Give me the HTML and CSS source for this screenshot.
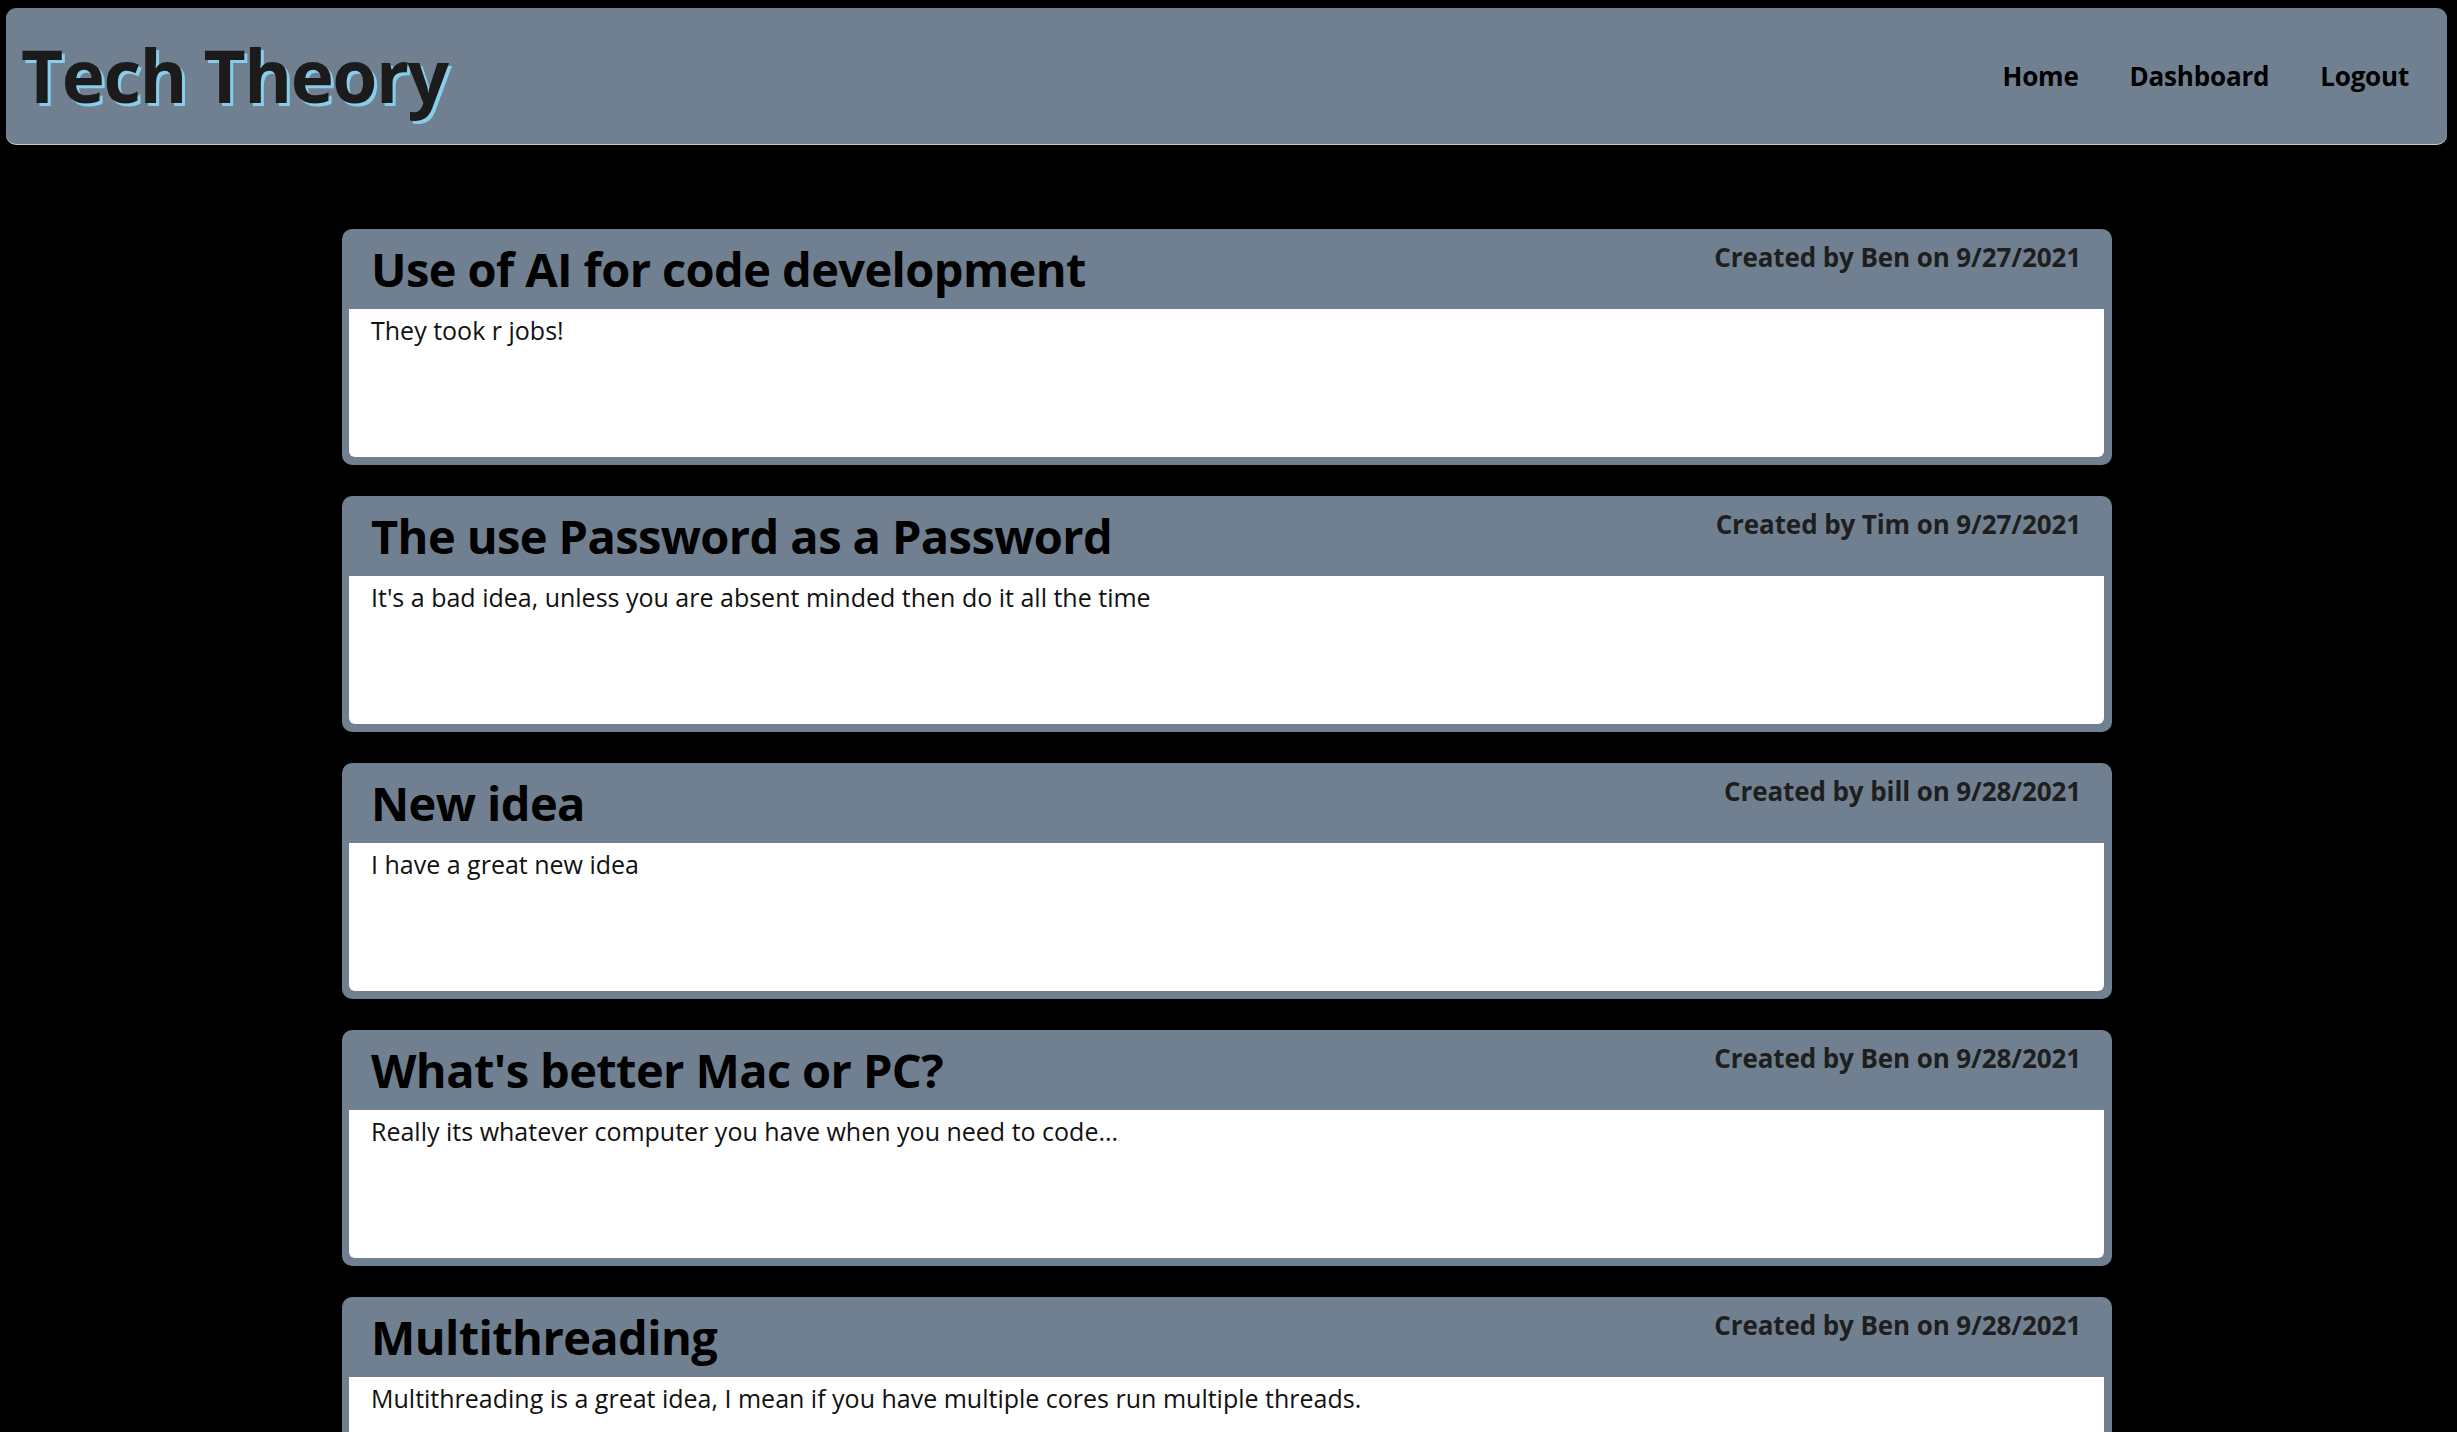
FILE: index.html
```html
<!DOCTYPE html>
<html lang="en">
<head>
<meta charset="utf-8">
<title>Tech Theory</title>
<link rel="stylesheet" href="styles.css">
</head>
<body>
<header class="site-header">
  <h1 class="brand">Tech Theory</h1>
  <nav class="nav">
    <a class="nav-link" href="#">Home</a>
    <a class="nav-link" href="#">Dashboard</a>
    <a class="nav-link" href="#">Logout</a>
  </nav>
</header>
<main class="posts">
  <article class="post">
    <div class="post-head">
      <h2 class="post-title">Use of AI for code development</h2>
      <span class="post-meta">Created by Ben on 9/27/2021</span>
    </div>
    <div class="post-body"><p class="post-text">They took r jobs!</p></div>
  </article>
  <article class="post">
    <div class="post-head">
      <h2 class="post-title">The use Password as a Password</h2>
      <span class="post-meta">Created by Tim on 9/27/2021</span>
    </div>
    <div class="post-body"><p class="post-text">It's a bad idea, unless you are absent minded then do it all the time</p></div>
  </article>
  <article class="post">
    <div class="post-head">
      <h2 class="post-title">New idea</h2>
      <span class="post-meta">Created by bill on 9/28/2021</span>
    </div>
    <div class="post-body"><p class="post-text">I have a great new idea</p></div>
  </article>
  <article class="post">
    <div class="post-head">
      <h2 class="post-title">What's better Mac or PC?</h2>
      <span class="post-meta">Created by Ben on 9/28/2021</span>
    </div>
    <div class="post-body"><p class="post-text">Really its whatever computer you have when you need to code...</p></div>
  </article>
  <article class="post">
    <div class="post-head">
      <h2 class="post-title">Multithreading</h2>
      <span class="post-meta">Created by Ben on 9/28/2021</span>
    </div>
    <div class="post-body"><p class="post-text">Multithreading is a great idea, I mean if you have multiple cores run multiple threads.</p></div>
  </article>
</main>
</body>
</html>
```
FILE: styles.css
```css
html, body {
  margin: 0;
  padding: 0;
  background: #000;
}
body {
  font-family: "Open Sans", "Noto Sans", sans-serif;
  color: #000;
  overflow: hidden;
}
.site-header {
  margin: 8px 10px 0 6px;
  height: 136px;
  box-sizing: border-box;
  background: #708090;
  border-radius: 10px;
  box-shadow: 0 1px 0 #c8c8c8;
  display: flex;
  align-items: center;
  justify-content: space-between;
  padding: 0 38px 0 15px;
}
.brand {
  margin: 0;
  font-size: 73px;
  font-weight: 700;
  letter-spacing: -1.5px;
  color: #1b1b1b;
  text-shadow: 3px 3px 0 #87ceeb;
  line-height: 1;
  padding-bottom: 4px;
}
.nav {
  display: flex;
  gap: 51px;
}
.nav-link {
  color: #000;
  text-decoration: none;
  font-weight: 700;
  font-size: 26px;
  letter-spacing: -0.2px;
}
.posts {
  width: 1770px;
  margin: 85px 0 0 342px;
  display: flex;
  flex-direction: column;
  gap: 31px;
}
.post {
  background: #708090;
  border-radius: 10px;
  padding: 0 8px 8px 7px;
}
.post-head {
  height: 80px;
  display: flex;
  justify-content: space-between;
  align-items: flex-start;
  padding: 0 23px 0 22px;
}
.post-title {
  margin: 8px 0 0;
  font-size: 47px;
  font-weight: 700;
  letter-spacing: -0.6px;
  color: #000;
  line-height: 1.362;
}
.post-meta {
  margin-top: 10px;
  font-size: 26px;
  font-weight: 700;
  color: #1e1e1e;
  letter-spacing: -0.1px;
}
.post-body {
  background: #fff;
  height: 148px;
  border-radius: 0 0 6px 6px;
  padding: 4px 22px 0;
  box-sizing: border-box;
}
.post-text {
  margin: 0;
  font-size: 25px;
  color: #111;
}
```
